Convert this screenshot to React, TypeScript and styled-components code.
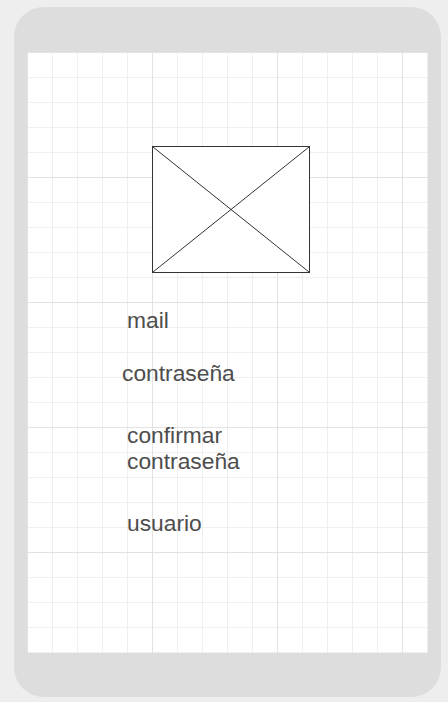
import styled, { createGlobalStyle } from 'styled-components';

const GlobalStyle = createGlobalStyle`
  html, body {
    margin: 0;
    padding: 0;
    background: #eeeeee;
  }
  body {
    font-family: "Liberation Sans", Arial, sans-serif;
  }
`;

const Page = styled.div`
  width: 448px;
  height: 702px;
  padding: 7px 0 0 14px;
  box-sizing: border-box;
`;

const Phone = styled.div`
  width: 427px;
  height: 690px;
  background: #dddddd;
  border-radius: 30px;
  padding: 45px 13px 0 13px;
  box-sizing: border-box;
`;

const Screen = styled.div`
  width: 401px;
  height: 601px;
  box-sizing: border-box;
  padding-top: 94px;
  background-color: #ffffff;
  background-image:
    linear-gradient(#e2e2e2 1px, transparent 1px),
    linear-gradient(90deg, #e2e2e2 1px, transparent 1px),
    linear-gradient(#efefef 1px, transparent 1px),
    linear-gradient(90deg, #efefef 1px, transparent 1px);
  background-size: 125px 125px, 125px 125px, 25px 25px, 25px 25px;
`;

const ImagePlaceholder = styled.div`
  width: 158px;
  height: 127px;
  margin-left: 125px;
  border: 1px solid #333333;
  box-sizing: border-box;
  background: #ffffff;

  svg {
    display: block;
    width: 100%;
    height: 100%;
  }
`;

const Form = styled.div`
  display: flex;
  flex-direction: column;
  padding-top: 34px;
`;

const Label = styled.div<{ $gap: number; $indent: number }>`
  margin-top: ${(p) => p.$gap}px;
  margin-left: ${(p) => p.$indent}px;
  font-size: 22.8px;
  line-height: 26px;
  color: #4d4d4d;
`;

const fields = [
  { text: 'mail', gap: 0, indent: 100 },
  { text: 'contraseña', gap: 27, indent: 95 },
  { text: 'confirmar\ncontraseña', gap: 36, indent: 100 },
  { text: 'usuario', gap: 36, indent: 100 },
];

export default function App() {
  return (
    <>
      <GlobalStyle />
      <Page>
        <Phone>
          <Screen>
            <ImagePlaceholder>
              <svg viewBox="0 0 156 125" preserveAspectRatio="none">
                <line x1="0" y1="0" x2="156" y2="125" stroke="#333" strokeWidth="1" />
                <line x1="156" y1="0" x2="0" y2="125" stroke="#333" strokeWidth="1" />
              </svg>
            </ImagePlaceholder>
            <Form>
              {fields.map((f) => (
                <Label key={f.text} $gap={f.gap} $indent={f.indent}>
                  {f.text.split('\n').map((line) => (
                    <div key={line}>{line}</div>
                  ))}
                </Label>
              ))}
            </Form>
          </Screen>
        </Phone>
      </Page>
    </>
  );
}
